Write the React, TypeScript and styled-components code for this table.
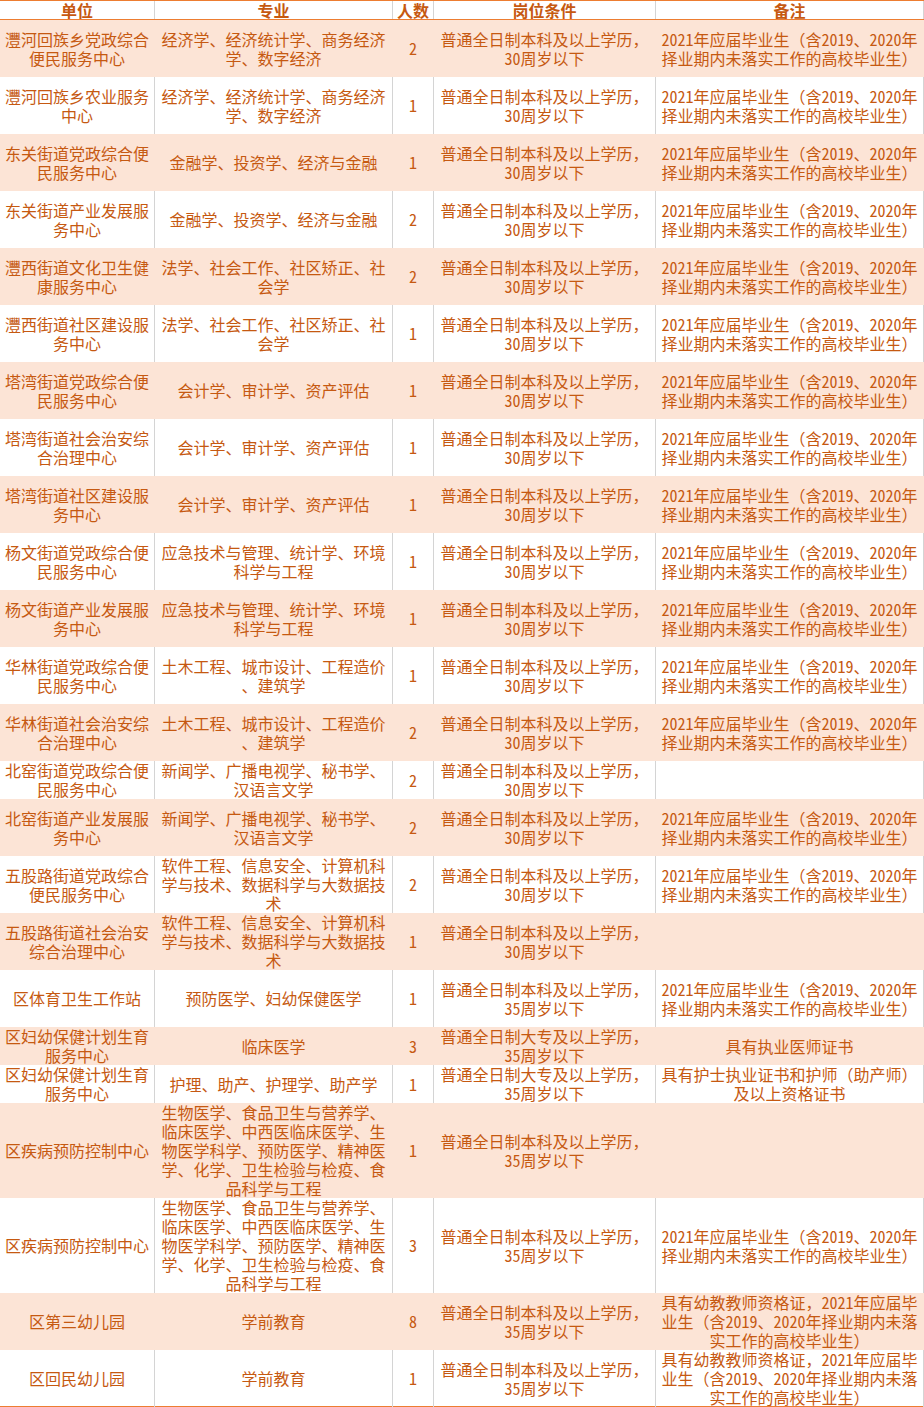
import styled, { createGlobalStyle } from "styled-components";

const ORANGE = "#ed7d31";
const INK = "#c65911";
const PEACH = "#fce4d6";
const GRID = "#d4d4d4";

const COLS = "155px 238px 41px 222px 268px";

const GlobalStyle = createGlobalStyle`
  html, body {
    margin: 0;
    padding: 0;
    background: #ffffff;
  }
  body {
    font-family: "Noto Sans CJK SC", "Noto Sans", sans-serif;
    color: ${INK};
  }
`;

const Sheet = styled.div`
  width: 924px;
  display: flex;
  flex-direction: column;
  border-top: 1px solid ${ORANGE};
  border-bottom: 1px solid ${ORANGE};
`;

const HeadRow = styled.div`
  display: grid;
  grid-template-columns: ${COLS};
  height: 18px;
  border-bottom: 1px solid ${ORANGE};
  background: #ffffff;
`;

const HeadCell = styled.div`
  box-sizing: border-box;
  border-right: 1px solid ${GRID};
  text-align: center;
  font-size: 16px;
  font-weight: 700;
  line-height: 18px;
  white-space: nowrap;
  overflow: visible;
`;

const Row = styled.div<{ $h: number; $fill: boolean }>`
  display: grid;
  grid-template-columns: ${COLS};
  height: ${(p) => p.$h}px;
  background: ${(p) => (p.$fill ? PEACH : "#ffffff")};
`;

const Cell = styled.div<{ $fill: boolean }>`
  box-sizing: border-box;
  display: flex;
  flex-direction: column;
  align-items: center;
  justify-content: center;
  padding: 0 1px;
  border-right: 1px solid ${(p) => (p.$fill ? PEACH : GRID)};
  overflow: visible;
`;

const Line = styled.span`
  display: block;
  text-align: center;
  font-size: 16px;
  line-height: 19px;
  white-space: nowrap;
`;

// digits in the sheet are half-width, like the old song-ti bitmap font
const Num = styled.span`
  font-feature-settings: "hwid" 1;
`;

function CellLines({ text }: { text: string }) {
  return (
    <>
      {text.split("\n").filter(Boolean).map((line, i) => (
        <Line key={i}>
          {line.split(/(\d+)/).map((part, j) =>
            /^\d+$/.test(part) ? <Num key={j}>{part}</Num> : part
          )}
        </Line>
      ))}
    </>
  );
}

type Job = {
  unit: string;
  major: string;
  count: number;
  cond: string;
  note: string;
  h?: number;
};

const C30 = "普通全日制本科及以上学历，\n30周岁以下";
const C35 = "普通全日制本科及以上学历，\n35周岁以下";
const C35D = "普通全日制大专及以上学历，\n35周岁以下";
const GRAD = "2021年应届毕业生（含2019、2020年\n择业期内未落实工作的高校毕业生）";
const KIDS =
  "具有幼教教师资格证，2021年应届毕\n业生（含2019、2020年择业期内未落\n实工作的高校毕业生）";

const ECON = "经济学、经济统计学、商务经济\n学、数字经济";
const FIN = "金融学、投资学、经济与金融";
const LAW = "法学、社会工作、社区矫正、社\n会学";
const ACC = "会计学、审计学、资产评估";
const EMG = "应急技术与管理、统计学、环境\n科学与工程";
const CIV = "土木工程、城市设计、工程造价\n、建筑学";
const NEWS = "新闻学、广播电视学、秘书学、\n汉语言文学";
const SOFT = "软件工程、信息安全、计算机科\n学与技术、数据科学与大数据技\n术";
const MED =
  "生物医学、食品卫生与营养学、\n临床医学、中西医临床医学、生\n物医学科学、预防医学、精神医\n学、化学、卫生检验与检疫、食\n品科学与工程";

const jobs: Job[] = [
  { unit: "灃河回族乡党政综合\n便民服务中心", major: ECON, count: 2, cond: C30, note: GRAD },
  { unit: "灃河回族乡农业服务\n中心", major: ECON, count: 1, cond: C30, note: GRAD },
  { unit: "东关街道党政综合便\n民服务中心", major: FIN, count: 1, cond: C30, note: GRAD },
  { unit: "东关街道产业发展服\n务中心", major: FIN, count: 2, cond: C30, note: GRAD },
  { unit: "灃西街道文化卫生健\n康服务中心", major: LAW, count: 2, cond: C30, note: GRAD },
  { unit: "灃西街道社区建设服\n务中心", major: LAW, count: 1, cond: C30, note: GRAD },
  { unit: "塔湾街道党政综合便\n民服务中心", major: ACC, count: 1, cond: C30, note: GRAD },
  { unit: "塔湾街道社会治安综\n合治理中心", major: ACC, count: 1, cond: C30, note: GRAD },
  { unit: "塔湾街道社区建设服\n务中心", major: ACC, count: 1, cond: C30, note: GRAD },
  { unit: "杨文街道党政综合便\n民服务中心", major: EMG, count: 1, cond: C30, note: GRAD },
  { unit: "杨文街道产业发展服\n务中心", major: EMG, count: 1, cond: C30, note: GRAD },
  { unit: "华林街道党政综合便\n民服务中心", major: CIV, count: 1, cond: C30, note: GRAD },
  { unit: "华林街道社会治安综\n合治理中心", major: CIV, count: 2, cond: C30, note: GRAD },
  { unit: "北窑街道党政综合便\n民服务中心", major: NEWS, count: 2, cond: C30, note: "", h: 38 },
  { unit: "北窑街道产业发展服\n务中心", major: NEWS, count: 2, cond: C30, note: GRAD },
  { unit: "五股路街道党政综合\n便民服务中心", major: SOFT, count: 2, cond: C30, note: GRAD },
  { unit: "五股路街道社会治安\n综合治理中心", major: SOFT, count: 1, cond: C30, note: "" },
  { unit: "区体育卫生工作站", major: "预防医学、妇幼保健医学", count: 1, cond: C35, note: GRAD },
  { unit: "区妇幼保健计划生育\n服务中心", major: "临床医学", count: 3, cond: C35D, note: "具有执业医师证书", h: 38 },
  {
    unit: "区妇幼保健计划生育\n服务中心",
    major: "护理、助产、护理学、助产学",
    count: 1,
    cond: C35D,
    note: "具有护士执业证书和护师（助产师）\n及以上资格证书",
    h: 38,
  },
  { unit: "区疾病预防控制中心", major: MED, count: 1, cond: C35, note: "", h: 95 },
  { unit: "区疾病预防控制中心", major: MED, count: 3, cond: C35, note: GRAD, h: 95 },
  { unit: "区第三幼儿园", major: "学前教育", count: 8, cond: C35, note: KIDS },
  { unit: "区回民幼儿园", major: "学前教育", count: 1, cond: C35, note: KIDS, h: 56 },
];

const headers = ["单位", "专业", "人数", "岗位条件", "备注"];

export default function App() {
  return (
    <>
      <GlobalStyle />
      <Sheet>
        <HeadRow>
          {headers.map((h) => (
            <HeadCell key={h}>{h}</HeadCell>
          ))}
        </HeadRow>
        {jobs.map((job, i) => {
          const fill = i % 2 === 0;
          return (
            <Row key={i} $h={job.h ?? 57} $fill={fill}>
              <Cell $fill={fill}>
                <CellLines text={job.unit} />
              </Cell>
              <Cell $fill={fill}>
                <CellLines text={job.major} />
              </Cell>
              <Cell $fill={fill}>
                <CellLines text={String(job.count)} />
              </Cell>
              <Cell $fill={fill}>
                <CellLines text={job.cond} />
              </Cell>
              <Cell $fill={fill}>
                <CellLines text={job.note} />
              </Cell>
            </Row>
          );
        })}
      </Sheet>
    </>
  );
}
